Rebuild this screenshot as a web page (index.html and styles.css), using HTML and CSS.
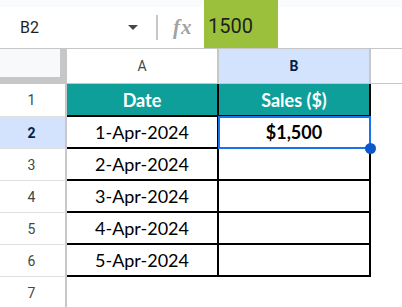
FILE: index.html
```html
<!DOCTYPE html>
<html>
<head>
<meta name="viewport" content="width=device-width, initial-scale=1">
<link rel="stylesheet" href="styles.css">
</head>
<body>

<div class="formula-bar">
  <div class="name-box">
    <span>B2</span>
    <span class="caret"></span>
  </div>
  <div class="sep"></div>
  <div class="fx">fx</div>
  <div class="value">1500</div>
</div>

<div class="sheet">
  <!-- column headers -->
  <div class="corner"></div>
  <div class="col-head">A</div>
  <div class="col-head active">B</div>
  <div class="col-head rest"></div>

  <div class="row-head">1</div>
  <div class="cell title">Date</div>
  <div class="cell title">Sales ($)</div>
  <div class="blank"></div>

  <div class="row-head active">2</div>
  <div class="cell">1-Apr-2024</div>
  <div class="cell selected"><b>$1,500</b>
    <div class="sel"><span class="handle"></span></div>
  </div>
  <div class="blank"></div>

  <div class="row-head">3</div>
  <div class="cell">2-Apr-2024</div>
  <div class="cell"></div>
  <div class="blank"></div>

  <div class="row-head">4</div>
  <div class="cell">3-Apr-2024</div>
  <div class="cell"></div>
  <div class="blank"></div>

  <div class="row-head">5</div>
  <div class="cell">4-Apr-2024</div>
  <div class="cell"></div>
  <div class="blank"></div>

  <div class="row-head">6</div>
  <div class="cell">5-Apr-2024</div>
  <div class="cell"></div>
  <div class="blank"></div>

  <div class="row-head last">7</div>
  <div class="blank"></div>
  <div class="blank"></div>
  <div class="blank"></div>
</div>

</body>
</html>
```

FILE: styles.css
```css
body {
    margin: 0;
    width: 402px;
    height: 307px;
    overflow: hidden;
    background: #fff;
    font-family: Roboto, "Liberation Sans", Arial, sans-serif;
}

/* formula bar */
.formula-bar {
    display: flex;
    height: 48px;
    border-bottom: 1px solid #c4c7c5;
    background: linear-gradient(#f9fbfd 7px, #fff 7px);
}

.name-box {
    width: 140px;
    box-sizing: border-box;
    padding: 7px 2px 0 20px;
    display: flex;
    align-items: center;
    justify-content: space-between;
    font-size: 16px;
    color: #1f1f1f;
}

.caret {
    width: 0;
    height: 0;
    border-left: 5px solid transparent;
    border-right: 5px solid transparent;
    border-top: 5px solid #444746;
}

.sep {
    width: 2px;
    height: 25px;
    margin: 15px 0 0 16px;
    background: #c7c7c7;
}

.fx {
    width: 31px;
    margin-left: 15px;
    padding-top: 7px;
    display: flex;
    align-items: center;
    font-family: "Liberation Serif", serif;
    font-style: italic;
    font-weight: bold;
    font-size: 21px;
    letter-spacing: 1px;
    color: #a3a3a3;
}

.value {
    width: 74px;
    box-sizing: border-box;
    padding: 3px 0 0 4px;
    display: flex;
    align-items: center;
    background: #9bc13c;
    font-size: 20px;
    color: #1f1f1f;
}

/* grid */
.sheet {
    display: grid;
    grid-template-columns: 67px 152px 152px 1fr;
    grid-template-rows: 35px 33px repeat(6, 32px);
}

.sheet > div {
    box-sizing: border-box;
}

.corner {
    background: #f8f9fa;
    border-right: 7px solid #c7c7c7;
    border-bottom: 7px solid #c7c7c7;
}

.col-head {
    display: flex;
    align-items: center;
    justify-content: center;
    border-right: 2px solid #c7c7c7;
    border-bottom: 1px solid #c7c7c7;
    font-size: 14px;
    color: #444746;
}

.col-head.rest {
    border-right: none;
}

.col-head.active {
    background: #d3e3fd;
    color: #041e49;
    font-weight: bold;
}

.row-head {
    display: flex;
    align-items: center;
    justify-content: center;
    padding-right: 2px;
    border-right: 2px solid #c7c7c7;
    border-bottom: 1px solid #e1e1e1;
    font-size: 14px;
    color: #444746;
}

.row-head.active {
    background: #d3e3fd;
    color: #041e49;
    font-weight: bold;
}

.row-head.last {
    border-bottom: none;
}

.cell {
    display: flex;
    align-items: center;
    justify-content: center;
    border-right: 2px solid #000;
    border-bottom: 2px solid #000;
    font-family: Lato, "Liberation Sans", sans-serif;
    font-size: 18px;
    color: #000;
}

.cell.title {
    background: #0f9f9a;
    color: #fff;
    font-weight: bold;
}

.cell.selected {
    position: relative;
}

.sel {
    position: absolute;
    left: -1px;
    top: -1px;
    right: -2px;
    bottom: -2px;
    border: 2px solid #1a73e8;
}

.handle {
    position: absolute;
    right: -7px;
    bottom: -7px;
    width: 11px;
    height: 11px;
    border-radius: 50%;
    background: #0b57d0;
}
```
